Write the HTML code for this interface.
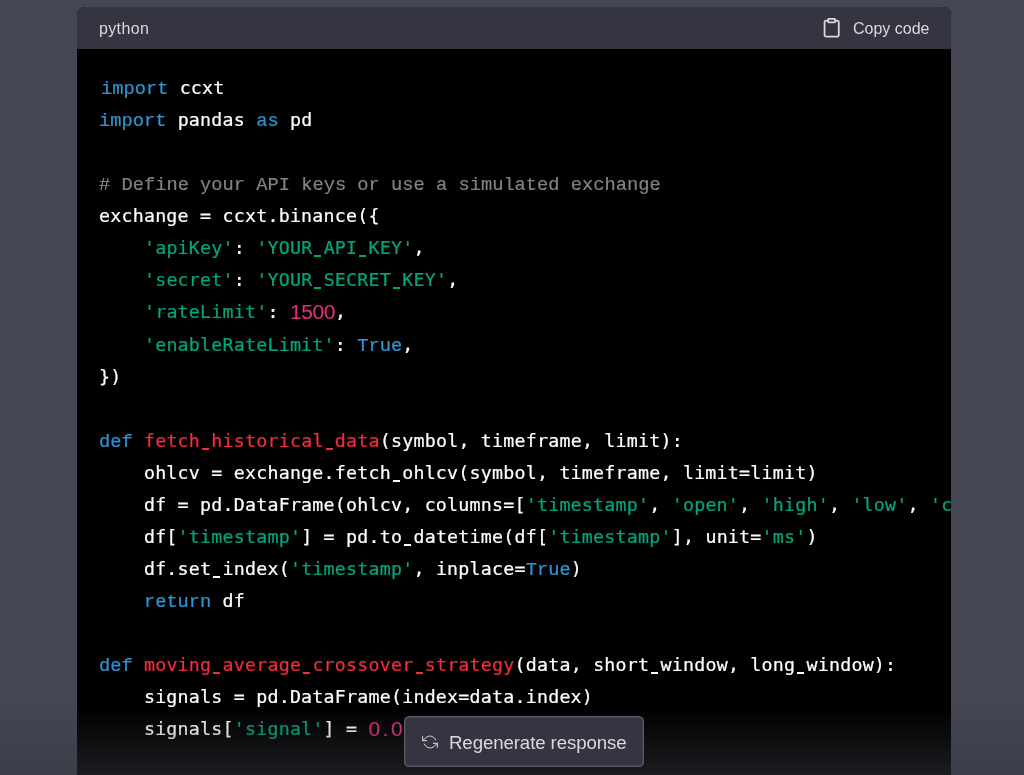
<!DOCTYPE html>
<html lang="en">
<head>
<meta charset="utf-8">
<title>ChatGPT</title>
<style>
*{box-sizing:border-box;margin:0;padding:0}
html,body{width:1024px;height:775px;overflow:hidden;background:#444654}
body{position:relative;font-family:"Liberation Sans",sans-serif;color:#d9d9e3}
.box{position:absolute;left:77.4px;top:6.6px;width:873.3px;height:800px;background:#000;border-radius:8px;overflow:hidden}
.hdr{height:42.7px;padding-top:1.6px !important;background:#343541;display:flex;align-items:center;justify-content:space-between;padding:0 21.33px;font-size:16px;color:#d9d9e3}
.copy{display:flex;align-items:center;gap:10.67px}
.copy svg{width:21.33px;height:21.33px;display:block;position:relative;top:-1.3px}
.gs{will-change:transform}
pre{position:absolute;left:21.6px;top:65.2px;font-family:"DejaVu Sans Mono","Liberation Mono",monospace;font-size:18.3px;letter-spacing:.2225px;line-height:32.06px;color:#fff;white-space:pre;-webkit-text-stroke:.22px}
pre span{line-height:0}
.k,.c{letter-spacing:0}
.k{color:#2e95d3;font-family:"Liberation Mono",monospace;font-size:18.73px}.s{color:#00a67d}.f{color:#f22c3d}.n{color:#df3079;font-family:"Liberation Sans",sans-serif;display:inline-block;font-size:21px;letter-spacing:-.44px;line-height:normal !important;transform:scaleY(.945);transform-origin:0 19px;position:relative;top:.4px;-webkit-text-stroke:.12px #df3079}
.d{letter-spacing:5.4px;position:relative;left:2.7px}
.c{color:rgba(255,255,255,.5);font-family:"Liberation Mono",monospace;font-size:18.73px;-webkit-text-stroke:.08px}
.u{-webkit-text-stroke:0;position:relative;-webkit-text-fill-color:transparent}
.u::after{content:"";position:absolute;left:2.1px;width:7px;height:2px;top:18px;background:currentColor}
.fade{position:absolute;left:0;top:706px;width:1024px;height:225px;background:linear-gradient(180deg,rgba(53,55,64,0),#353740 58.85%)}
.btn{position:absolute;left:404.2px;top:716px;height:51.1px;width:239.7px;box-shadow:inset 0 0 0 1.4px #565869;border-radius:5.33px;background:#343541;display:flex;align-items:center;padding:0 17.4px;gap:10.67px;font-size:18.67px;color:#d9d9e3;white-space:nowrap}
.btn svg{width:16px;height:16px;display:block;flex:none}
</style>
</head>
<body>
<div class="box">
<div class="hdr"><span class="gs" style="position:relative;left:-.2px;top:.3px;letter-spacing:.35px">python</span><span class="copy"><svg viewBox="0 0 24 24" fill="none" stroke="currentColor" stroke-width="2" stroke-linecap="round" stroke-linejoin="round"><path d="M16 4h2a2 2 0 0 1 2 2v14a2 2 0 0 1-2 2H6a2 2 0 0 1-2-2V6a2 2 0 0 1 2-2h2"/><rect x="8" y="2" width="8" height="4" rx="1" ry="1"/></svg><span class="gs">Copy code</span></span></div>
<pre class="gs"><span style="position:relative;left:2px"><span class="k">import</span> ccxt</span>
<span class="k">import</span> pandas <span class="k">as</span> pd

<span class="c"># Define your API keys or use a simulated exchange</span>
exchange = ccxt.binance({
    <span class="s">'apiKey'</span>: <span class="s">'YOUR<span class="u">_</span>API<span class="u">_</span>KEY'</span>,
    <span class="s">'secret'</span>: <span class="s">'YOUR<span class="u">_</span>SECRET<span class="u">_</span>KEY'</span>,
    <span class="s">'rateLimit'</span>: <span class="n">1500</span>,
    <span class="s">'enableRateLimit'</span>: <span class="k">True</span>,
})

<span class="k">def</span> <span class="f">fetch<span class="u">_</span>historical<span class="u">_</span>data</span>(symbol, timeframe, limit):
    ohlcv = exchange.fetch<span class="u">_</span>ohlcv(symbol, timeframe, limit=limit)
    df = pd.DataFrame(ohlcv, columns=[<span class="s">'timestamp'</span>, <span class="s">'open'</span>, <span class="s">'high'</span>, <span class="s">'low'</span>, <span class="s">'close'</span>, <span class="s">'volume'</span>])
    df[<span class="s">'timestamp'</span>] = pd.to<span class="u">_</span>datetime(df[<span class="s">'timestamp'</span>], unit=<span class="s">'ms'</span>)
    df.set<span class="u">_</span>index(<span class="s">'timestamp'</span>, inplace=<span class="k">True</span>)
    <span class="k">return</span> df

<span class="k">def</span> <span class="f">moving<span class="u">_</span>average<span class="u">_</span>crossover<span class="u">_</span>strategy</span>(data, short<span class="u">_</span>window, long<span class="u">_</span>window):
    signals = pd.DataFrame(index=data.index)
    signals[<span class="s">'signal'</span>] = <span class="n">0<span class="d">.</span>0</span></pre>
</div>
<div class="fade"></div>
<div class="btn"><svg viewBox="0 0 24 24" fill="none" stroke="currentColor" stroke-width="1.5" stroke-linecap="round" stroke-linejoin="round"><polyline points="1 4 1 10 7 10"/><polyline points="23 20 23 14 17 14"/><path d="M20.49 9A9 9 0 0 0 5.64 5.64L1 10m22 4l-4.64 4.36A9 9 0 0 1 3.51 15"/></svg><span class="gs" style="position:relative;top:1.6px;left:.6px;letter-spacing:-.1px">Regenerate response</span></div>
</body>
</html>
